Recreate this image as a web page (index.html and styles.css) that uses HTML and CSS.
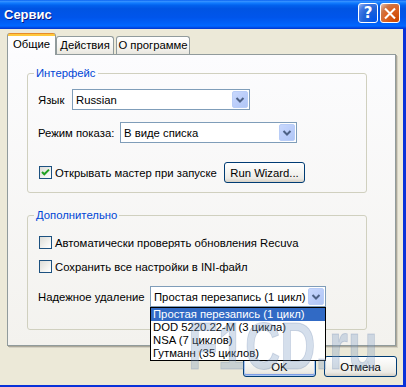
FILE: index.html
```html
<!DOCTYPE html>
<html lang="ru">
<head>
<meta charset="utf-8">
<title>Сервис</title>
<link rel="stylesheet" href="styles.css">
</head>
<body>
<div class="window">
  <div class="titlebar">
    <span class="title">Сервис</span>
    <div class="caption-btns">
      <span class="cbtn help">?</span>
      <span class="cbtn close"><svg width="19" height="19" viewBox="0 0 19 19"><path d="M5 5 L14 14 M14 5 L5 14" stroke="#fff" stroke-width="2.2" stroke-linecap="square"/></svg></span>
    </div>
  </div>
  <div class="client">
    <div class="tabs">
      <div class="tab t1 active">Общие</div>
      <div class="tab t2">Действия</div>
      <div class="tab t3">О программе</div>
    </div>
    <div class="panel">
      <fieldset class="group g1">
        <legend>Интерфейс</legend>
        <div class="row r1">
          <span class="lbl l1">Язык</span>
          <div class="combo c1"><span class="val">Russian</span><span class="dd"><svg width="14" height="15" viewBox="0 0 14 15"><path d="M3.5 6 L7 9.5 L10.5 6" fill="none" stroke="#4D6185" stroke-width="2"/></svg></span></div>
        </div>
        <div class="row r2">
          <span class="lbl l2">Режим показа:</span>
          <div class="combo c2"><span class="val">В виде списка</span><span class="dd"><svg width="14" height="15" viewBox="0 0 14 15"><path d="M3.5 6 L7 9.5 L10.5 6" fill="none" stroke="#4D6185" stroke-width="2"/></svg></span></div>
        </div>
        <div class="row r3">
          <div class="check wiz"><span class="box checked"><svg width="11" height="11" viewBox="0 0 11 11"><path d="M2 5 L4.3 7.3 L9 2.6" fill="none" stroke="#21A121" stroke-width="2"/></svg></span><span>Открывать мастер при запуске</span></div>
          <span class="btn wizbtn">Run Wizard...</span>
        </div>
      </fieldset>
      <fieldset class="group g2">
        <legend>Дополнительно</legend>
        <div class="row r4">
          <div class="check"><span class="box"></span><span>Автоматически проверять обновления Recuva</span></div>
        </div>
        <div class="row r5">
          <div class="check"><span class="box"></span><span>Сохранить все настройки в INI-файл</span></div>
        </div>
        <div class="row r6">
          <span class="lbl l3">Надежное удаление</span>
          <div class="combo c3"><span class="val">Простая перезапись (1 цикл)</span><span class="dd"><svg width="14" height="15" viewBox="0 0 14 15"><path d="M3.5 6 L7 9.5 L10.5 6" fill="none" stroke="#4D6185" stroke-width="2"/></svg></span>
            <ul class="dropdown">
              <li class="sel">Простая перезапись (1 цикл)</li>
              <li>DOD 5220.22-M (3 цикла)</li>
              <li>NSA (7 циклов)</li>
              <li>Гутманн (35 циклов)</li>
            </ul>
          </div>
        </div>
      </fieldset>
    </div>
    <div class="footer">
      <span class="btn fbtn default">OK</span>
      <span class="btn fbtn">Отмена</span>
    </div>
    <div class="watermark" aria-hidden="true">F1CD.ru</div>
  </div>
</div>
</body>
</html>
```
FILE: styles.css
```css
* { box-sizing: border-box; }
html, body { margin: 0; padding: 0; }
body {
  width: 406px;
  height: 387px;
  overflow: hidden;
  font-family: "Liberation Sans", Arial, sans-serif;
  font-size: 11.3px;
  color: #000;
  background: #ECE9D8;
}
.window {
  width: 406px;
  height: 387px;
  display: flex;
  flex-direction: column;
}
.titlebar {
  height: 29px;
  flex: none;
  display: flex;
  justify-content: space-between;
  align-items: flex-start;
  padding: 0 6px 0 4px;
  background: linear-gradient(to bottom, #0058EE 0, #3A93FF 4%, #127DFF 10%, #0262EE 18%, #0054E3 30%, #0055EB 60%, #0060F8 80%, #0066FF 88%, #005BF4 93%, #003DD7 97%, #003DD7 100%);
}
.title {
  margin-top: 7px;
  color: #fff;
  font-family: "Liberation Sans", Arial, sans-serif;
  font-weight: bold;
  font-size: 13px;
  line-height: 15px;
  text-shadow: 1px 1px 0 #0A1883;
}
.caption-btns {
  display: flex;
  gap: 2px;
  margin-top: 3px;
}
.cbtn {
  width: 20px;
  height: 20px;
  border: 1px solid #fff;
  border-radius: 3px;
  display: flex;
  align-items: center;
  justify-content: center;
  color: #fff;
  font-weight: bold;
  font-size: 15px;
  line-height: 1;
}
.help {
  background: radial-gradient(circle at 85% 85%, #0054E9 0%, #2263D5 50%, #4479E4 75%, #A3BBEC 100%);
  font-family: "DejaVu Sans", sans-serif;
}
.close {
  background: radial-gradient(circle at 85% 85%, #CC4600 0%, #DC6527 55%, #CD7546 72%, #E9C6B5 100%);
}
.client {
  flex: 1;
  position: relative;
  background: #ECE9D8;
  border-right: 3px solid #0831D9;
  border-bottom: 2px solid #0831D9;
  padding-top: 4px;
}
.tabs {
  display: flex;
  align-items: flex-end;
  height: 21px;
  padding-left: 7px;
  position: relative;
  z-index: 2;
}
.tab {
  height: 18px;
  border: 1px solid #919B9C;
  border-bottom: none;
  border-radius: 3px 3px 0 0;
  background: linear-gradient(#FFFFFF, #F6F5F1 60%, #E8E6DE);
  text-align: center;
  line-height: 17px;
  white-space: nowrap;
}
.tab.active {
  height: 22px;
  margin-bottom: -1px;
  border-top: none;
  background: linear-gradient(#E68B2C 0, #E68B2C 1px, #FFC83C 1px, #FFC83C 3px, #FFFFFF 3px, #FCFCFE 100%);
  line-height: 21px;
  padding-top: 1px;
}
.t1 { width: 49px; }
.t2 { width: 58px; }
.t3 { width: 74px; margin-left: 2px; }
.panel {
  margin-left: 7px;
  width: 389px;
  height: 292px;
  border: 1px solid #919B9C;
  box-shadow: 1px 1px 0 #ACA899, 2px 2px 0 #D4D1C4;
  background: linear-gradient(#FCFCFE, #F3F2EE);
  padding: 12px 0 0 19px;
  position: relative;
  z-index: 1;
}
.group {
  width: 340px;
  margin: 0;
  padding: 0 0 0 10px;
  border: 1px solid #D0D0BF;
  border-radius: 3px;
}
.group legend {
  color: #0046D5;
  padding: 0 2px;
  margin-left: -4px;
  line-height: 13px;
}
.g1 { padding-bottom: 9px; }
.g2 { margin-top: 16px; padding-bottom: 22px; }
.row {
  display: flex;
  align-items: center;
}
.r1 { margin-top: 9px; }
.r2 { margin-top: 12px; }
.r3 { margin-top: 19px; }
.r4 { margin-top: 14px; height: 13px; }
.r5 { margin-top: 11px; height: 13px; }
.r6 { margin-top: 13px; }
.lbl { flex: none; white-space: nowrap; }
.l1 { width: 34px; }
.l2 { width: 82px; }
.l3 { width: 112px; }
.combo {
  position: relative;
  height: 21px;
  border: 1px solid #7F9DB9;
  background: #fff;
  display: flex;
  align-items: center;
  padding-left: 3px;
}
.c1 { width: 178px; }
.c2 { width: 177px; }
.c3 { width: 176px; }
.val { flex: 1; white-space: nowrap; }
.dd {
  width: 16px;
  height: 17px;
  margin-right: 1px;
  flex: none;
  border: 1px solid #B9CDF7;
  border-radius: 2px;
  background: linear-gradient(135deg, #C8D8FD 0%, #BCCEFA 50%, #B0C6F6 100%);
  display: flex;
  align-items: center;
  justify-content: center;
}
.check {
  display: flex;
  align-items: center;
  gap: 3px;
  margin-left: 1px;
  white-space: nowrap;
}
.wiz { width: 185px; }
.box {
  width: 13px;
  height: 13px;
  flex: none;
  border: 1px solid #1C5180;
  background: linear-gradient(135deg, #DCDCD7 0%, #F2F2EF 60%, #FFFFFF 100%);
  display: flex;
  align-items: center;
  justify-content: center;
}
.btn {
  display: flex;
  align-items: center;
  justify-content: center;
  height: 21px;
  border: 1px solid #003C74;
  border-radius: 3px;
  background: linear-gradient(#FFFFFF 0%, #F4F4F0 50%, #ECEBE6 80%, #D6D0C5 100%);
  white-space: nowrap;
}
.wizbtn { width: 81px; }
.dropdown {
  position: absolute;
  top: calc(100% + 1px);
  left: -1px;
  width: 176px;
  margin: 0;
  padding: 0;
  list-style: none;
  border: 1px solid #000;
  background: #fff;
  z-index: 5;
}
.dropdown li {
  height: 13px;
  line-height: 13px;
  padding-left: 2px;
  white-space: nowrap;
}
.dropdown li.sel {
  background: #316AC5;
  color: #fff;
}
.footer {
  display: flex;
  justify-content: flex-end;
  gap: 8px;
  margin-top: 10px;
  padding-right: 6px;
}
.fbtn { width: 73px; }
.default {
  box-shadow: inset 0 0 0 1px #A8C4F0, inset 0 -1px 0 1px #7D9DE6;
}
.watermark {
  position: absolute;
  left: 188px;
  top: 284px;
  font-family: "Liberation Sans", Arial, sans-serif;
  font-weight: bold;
  font-size: 66px;
  line-height: 66px;
  color: rgba(125, 155, 195, 0.32);
  -webkit-text-stroke: 1px rgba(90, 120, 165, 0.25);
  transform: scaleX(0.74);
  transform-origin: left top;
  white-space: nowrap;
  z-index: 3;
  pointer-events: none;
}
```
